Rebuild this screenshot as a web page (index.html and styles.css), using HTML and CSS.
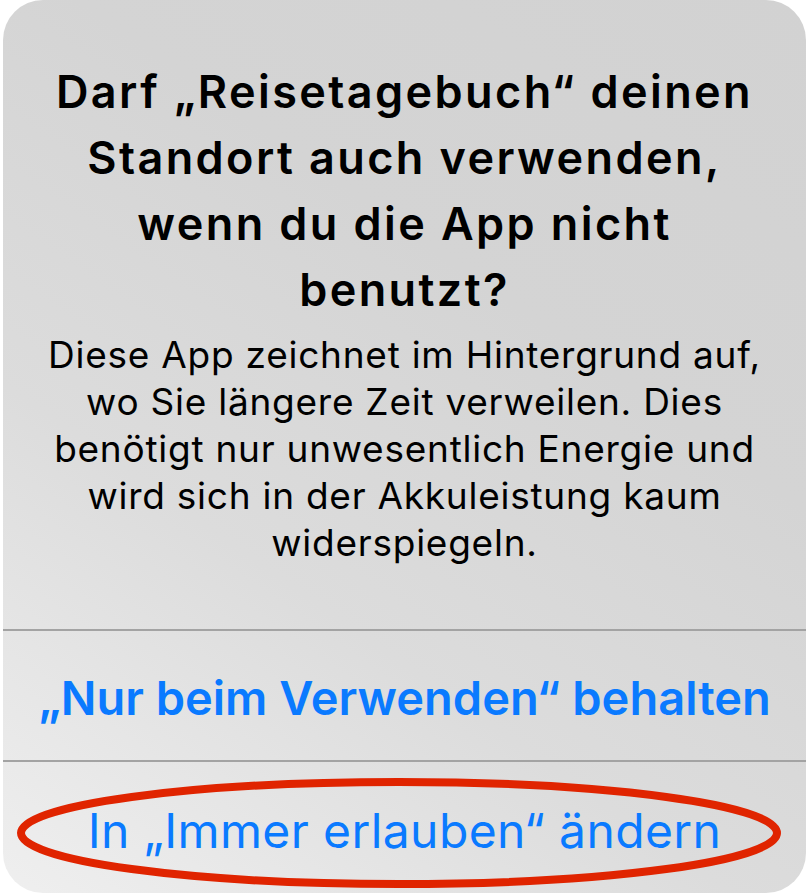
FILE: index.html
```html
<!DOCTYPE html>
<html lang="de">
<head>
<meta charset="utf-8">
<title>Standort</title>
<link rel="stylesheet" href="styles.css">
</head>
<body>
<div class="alert">
  <div class="content">
    <h1 class="title">Darf „Reisetagebuch“ deinen<br>Standort auch verwenden,<br>wenn du die App nicht<br>benutzt?</h1>
    <p class="message">Diese App zeichnet im Hintergrund auf,<br>wo Sie längere Zeit verweilen. Dies<br>benötigt nur unwesentlich Energie und<br>wird sich in der Akkuleistung kaum<br>widerspiegeln.</p>
  </div>
  <div class="action action-bold">„Nur beim Verwenden“ behalten</div>
  <div class="action action-last">In „Immer erlauben“ ändern</div>
  <svg class="ring" width="809" height="130" viewBox="0 0 809 130" aria-hidden="true">
    <ellipse cx="399" cy="65" rx="378" ry="51" fill="none" stroke="#e02400" stroke-width="8"/>
  </svg>
</div>
</body>
</html>
```

FILE: styles.css
```css
html, body {
  margin: 0;
  padding: 0;
  background: #ffffff;
  overflow: hidden;
}

body {
  width: 809px;
  height: 895px;
  font-family: Inter, "Noto Sans", sans-serif;
}

.alert {
  position: relative;
  box-sizing: border-box;
  margin: 0 3px 0 3px;
  width: 803px;
  height: 893px;
  border-radius: 40px;
  background: linear-gradient(35deg, #efefef 0%, #dcdcdc 35%, #d4d4d4 65%, #d2d2d2 100%);
  display: flex;
  flex-direction: column;
  overflow: hidden;
}

.content {
  padding: 59px 0 63px;
  border-bottom: 2px solid #a3a3a3;
  text-align: center;
  white-space: nowrap;
}

.title {
  margin: 0;
  font-size: 45px;
  line-height: 66px;
  font-weight: 600;
  letter-spacing: 2.4px;
  color: #000;
}

.message {
  margin: 8px 0 0;
  font-size: 37px;
  line-height: 47px;
  font-weight: 400;
  letter-spacing: 0.75px;
  color: #000;
}

.action {
  display: flex;
  align-items: center;
  justify-content: center;
  color: #0a7aff;
  white-space: nowrap;
}

.action-bold {
  height: 131px;
  padding-top: 4px;
  box-sizing: border-box;
  font-size: 47px;
  font-weight: 600;
  border-bottom: 2px solid #a3a3a3;
}

.action-last {
  flex: 1;
  padding-top: 6px;
  font-size: 48px;
  letter-spacing: 0.4px;
  font-weight: 400;
}

.ring {
  position: absolute;
  left: -3px;
  top: 768px;
}
```
